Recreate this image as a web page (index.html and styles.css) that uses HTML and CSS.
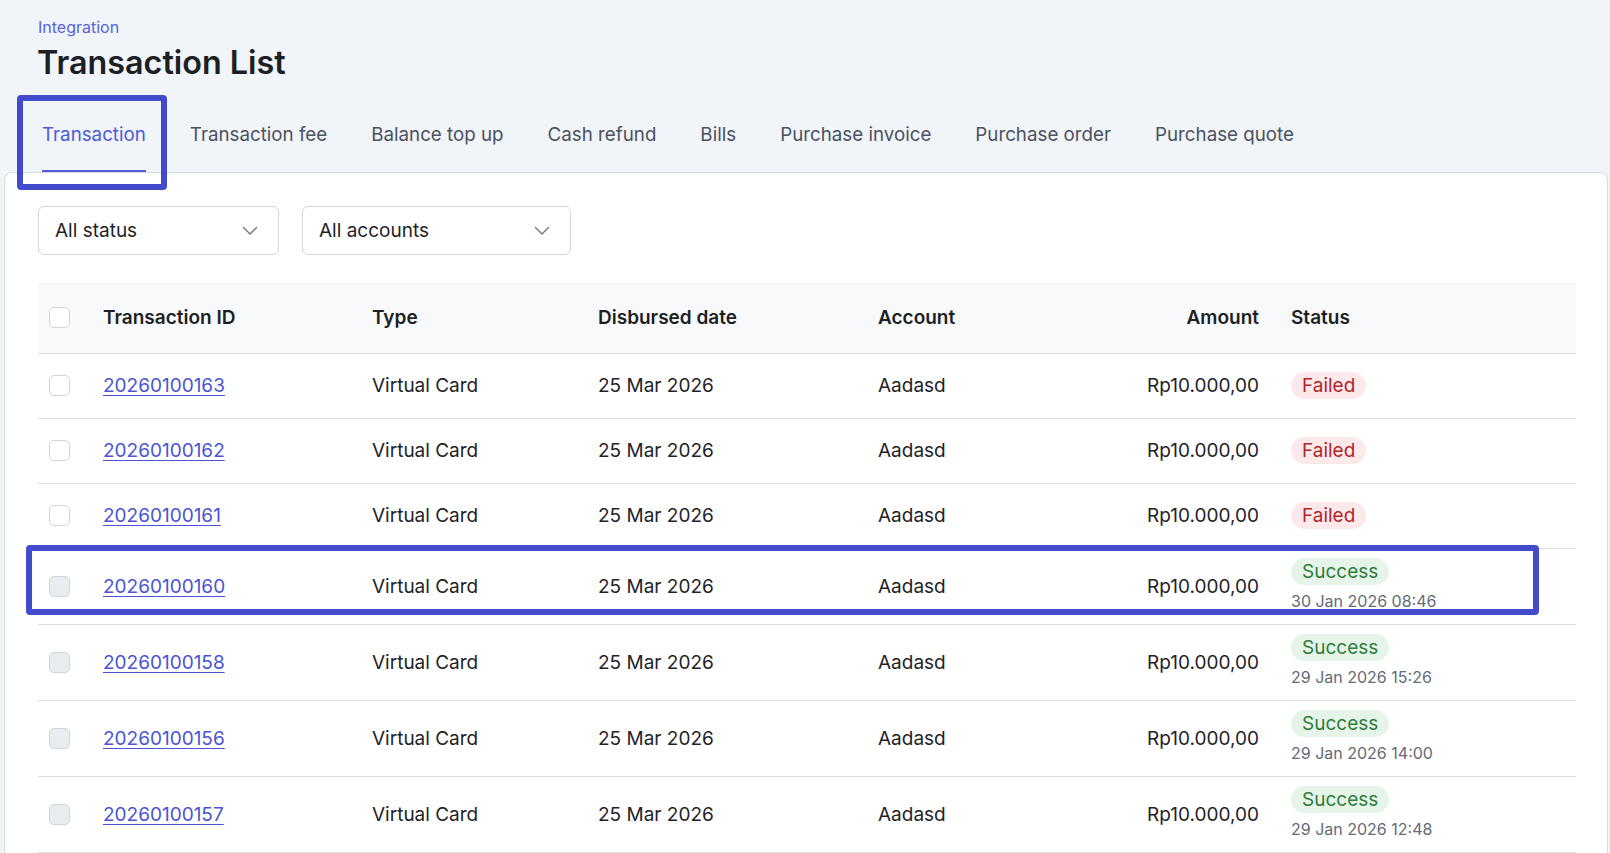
FILE: index.html
```html
<!DOCTYPE html>
<html lang="en">
<head>
    <meta charset="UTF-8">
    <meta name="viewport" content="width=device-width, initial-scale=1.0">
    <title>Transaction List</title>
    <link rel="stylesheet" href="styles.css">
</head>
<body>

<div class="page-head">
    <a class="crumb" href="#">Integration</a>
    <h1>Transaction List</h1>
</div>

<nav class="tabs">
    <a class="tab active" href="#">Transaction</a>
    <a class="tab" href="#">Transaction fee</a>
    <a class="tab" href="#">Balance top up</a>
    <a class="tab" href="#">Cash refund</a>
    <a class="tab" href="#">Bills</a>
    <a class="tab" href="#">Purchase invoice</a>
    <a class="tab" href="#">Purchase order</a>
    <a class="tab" href="#">Purchase quote</a>
</nav>

<div class="card">
    <div class="filters">
        <button class="select select-status" type="button">
            <span>All status</span>
            <svg width="16" height="16" viewBox="0 0 16 16"><path d="M1.5 4.5 8 11l6.5-6.5" fill="none" stroke="#6b7280" stroke-width="1.3" stroke-linecap="round" stroke-linejoin="round"/></svg>
        </button>
        <button class="select select-account" type="button">
            <span>All accounts</span>
            <svg width="16" height="16" viewBox="0 0 16 16"><path d="M1.5 4.5 8 11l6.5-6.5" fill="none" stroke="#6b7280" stroke-width="1.3" stroke-linecap="round" stroke-linejoin="round"/></svg>
        </button>
    </div>

    <table class="tx-table">
        <colgroup>
            <col class="col-check">
            <col class="col-id">
            <col class="col-type">
            <col class="col-date">
            <col class="col-account">
            <col class="col-amount">
            <col class="col-status">
        </colgroup>
        <thead>
            <tr>
                <th><span class="check"></span></th>
                <th>Transaction ID</th>
                <th>Type</th>
                <th>Disbursed date</th>
                <th>Account</th>
                <th class="num">Amount</th>
                <th>Status</th>
            </tr>
        </thead>
        <tbody>
            <tr>
                <td><span class="check"></span></td>
                <td><a href="#">20260100163</a></td>
                <td>Virtual Card</td>
                <td>25 Mar 2026</td>
                <td>Aadasd</td>
                <td class="num">Rp10.000,00</td>
                <td><span class="badge failed">Failed</span></td>
            </tr>
            <tr>
                <td><span class="check"></span></td>
                <td><a href="#">20260100162</a></td>
                <td>Virtual Card</td>
                <td>25 Mar 2026</td>
                <td>Aadasd</td>
                <td class="num">Rp10.000,00</td>
                <td><span class="badge failed">Failed</span></td>
            </tr>
            <tr>
                <td><span class="check"></span></td>
                <td><a href="#">20260100161</a></td>
                <td>Virtual Card</td>
                <td>25 Mar 2026</td>
                <td>Aadasd</td>
                <td class="num">Rp10.000,00</td>
                <td><span class="badge failed">Failed</span></td>
            </tr>
            <tr>
                <td><span class="check disabled"></span></td>
                <td><a href="#">20260100160</a></td>
                <td>Virtual Card</td>
                <td>25 Mar 2026</td>
                <td>Aadasd</td>
                <td class="num">Rp10.000,00</td>
                <td class="status-done"><span class="badge success">Success</span><span class="paid-at">30 Jan 2026 08:46</span></td>
            </tr>
            <tr>
                <td><span class="check disabled"></span></td>
                <td><a href="#">20260100158</a></td>
                <td>Virtual Card</td>
                <td>25 Mar 2026</td>
                <td>Aadasd</td>
                <td class="num">Rp10.000,00</td>
                <td class="status-done"><span class="badge success">Success</span><span class="paid-at">29 Jan 2026 15:26</span></td>
            </tr>
            <tr>
                <td><span class="check disabled"></span></td>
                <td><a href="#">20260100156</a></td>
                <td>Virtual Card</td>
                <td>25 Mar 2026</td>
                <td>Aadasd</td>
                <td class="num">Rp10.000,00</td>
                <td class="status-done"><span class="badge success">Success</span><span class="paid-at">29 Jan 2026 14:00</span></td>
            </tr>
            <tr>
                <td><span class="check disabled"></span></td>
                <td><a href="#">20260100157</a></td>
                <td>Virtual Card</td>
                <td>25 Mar 2026</td>
                <td>Aadasd</td>
                <td class="num">Rp10.000,00</td>
                <td class="status-done"><span class="badge success">Success</span><span class="paid-at">29 Jan 2026 12:48</span></td>
            </tr>
        </tbody>
    </table>
</div>

<!-- highlight frames -->
<div class="mark mark-tab"></div>
<div class="mark mark-row"></div>

</body>
</html>
```

FILE: styles.css
```css
* {
    box-sizing: border-box;
}
body {
    margin: 0;
    height: 100vh;
    overflow: hidden;
    position: relative;
    background: #f1f4f9;
    font-family: Inter, "Noto Sans", sans-serif;
    color: #1f2329;
}
a {
    text-decoration: none;
}

.page-head {
    padding: 17px 37px 0;
}
.crumb {
    display: block;
    padding-left: 1px;
    font-size: 16px;
    line-height: 20px;
    color: #5a62d6;
}
h1 {
    margin: 6px 0 0;
    font-size: 32.3px;
    line-height: 40px;
    font-weight: 600;
    color: #1c1f24;
}

.tabs {
    display: flex;
    gap: 44px;
    margin-top: 13px;
    padding-left: 42px;
}
.tab {
    padding: 26.5px 0 24.5px;
    border-bottom: 2px solid transparent;
    font-size: 18.75px;
    line-height: 23px;
    color: #4b5260;
}
.tab.active {
    color: #4f5bd8;
    border-bottom-color: #4f5bd8;
}

.card {
    margin: 0 2px 0 4px;
    padding: 33px 31px 0 33px;
    background: #fff;
    border: 1px solid #d7dce4;
    border-bottom: none;
    border-radius: 8px 8px 0 0;
}

.filters {
    display: flex;
    gap: 23px;
}
.select {
    display: flex;
    align-items: center;
    justify-content: space-between;
    height: 49px;
    padding: 0 20px 0 16px;
    background: #fff;
    border: 1px solid #d3d7de;
    border-radius: 6px;
    font-family: inherit;
    font-size: 19px;
    color: #1f2329;
}
.select-status {
    width: 241px;
}
.select-account {
    width: 269px;
}

.tx-table {
    width: 100%;
    margin-top: 28px;
    border-collapse: collapse;
    table-layout: fixed;
    font-size: 19px;
}
.col-check { width: 49px; }
.col-id { width: 269px; }
.col-type { width: 226px; }
.col-date { width: 280px; }
.col-account { width: 238px; }
.col-amount { width: 175px; }
.col-status { width: 301px; }

.tx-table th,
.tx-table td {
    padding: 12px 16px;
    text-align: left;
    vertical-align: middle;
    border-bottom: 1px solid #d9dde3;
}
.tx-table th:first-child,
.tx-table td:first-child {
    padding: 0 0 0 11px;
}
.tx-table th {
    height: 70px;
    background: #f8f9fb;
    font-weight: 600;
    color: #1c1f24;
}
.tx-table td {
    height: 65px;
}
.tx-table td.status-done {
    padding-top: 9px;
    padding-bottom: 12px;
}
.tx-table .num {
    text-align: right;
}
.tx-table td a {
    color: #4a54d4;
    text-decoration: underline;
    text-underline-offset: 3px;
    text-decoration-thickness: 1px;
}

.check {
    display: block;
    width: 21px;
    height: 21px;
    background: #fff;
    border: 1.5px solid #d0d5dc;
    border-radius: 5px;
}
.check.disabled {
    background: #e9ecf0;
}

.badge {
    display: inline-block;
    padding: 2px 11px;
    border-radius: 14px;
    font-size: 19px;
    line-height: 23px;
}
.badge.failed {
    background: #fde9ea;
    color: #b0262b;
}
.badge.success {
    background: #e7f4e9;
    color: #2e7d3a;
}
.paid-at {
    display: block;
    margin-top: 6px;
    font-size: 16px;
    line-height: 21px;
    color: #646b76;
}

.mark {
    position: absolute;
    border: 6px solid #434bcd;
    border-radius: 4px;
    pointer-events: none;
}
.mark-tab {
    left: 17px;
    top: 95px;
    width: 150px;
    height: 95px;
}
.mark-row {
    left: 26px;
    top: 545px;
    width: 1513px;
    height: 70px;
}
```
